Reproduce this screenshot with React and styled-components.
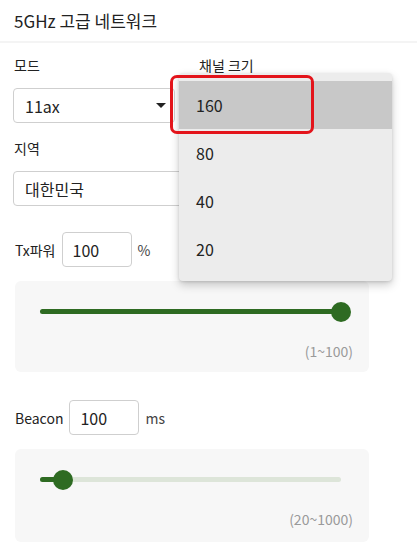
import React from 'react';
import styled, { createGlobalStyle } from 'styled-components';

const Global = createGlobalStyle`
	body {
		margin: 0;
		background: #fff;
		font-family: 'Noto Sans CJK KR', 'Noto Sans', sans-serif;
		color: #222;
	}
`;

const Pagina = styled.div`
	position: relative;
	width: 417px;
	height: 550px;
	overflow: hidden;
`;

const Encabezado = styled.div`
	height: 41px;
	padding: 0 14px;
	display: flex;
	align-items: center;
	font-size: 17px;
	border-bottom: 2px solid #f4f4f4;
	color: #222;
`;

const Formulario = styled.div`
	padding: 11px 13px 0 13px;
	display: flex;
	flex-direction: column;
`;

const Fila = styled.div`
	display: flex;
	gap: 23px;
`;

const Campo = styled.div`
	display: flex;
	flex-direction: column;
	width: ${(props) => props.ancho || '162px'};
`;

const Etiqueta = styled.div`
	font-size: 14px;
	height: 22px;
	line-height: 22px;
	padding-left: 1px;
	margin-bottom: 12px;
`;

const Selector = styled.div`
	height: 33px;
	border: 1px solid #cfcfcf;
	border-radius: 4px;
	display: flex;
	align-items: center;
	justify-content: space-between;
	padding: 0 8px 0 11px;
	font-size: 16px;
	margin-bottom: ${(props) => props.abajo || '14px'};
`;

const Flecha = styled.span`
	width: 0;
	height: 0;
	border-left: 5px solid transparent;
	border-right: 5px solid transparent;
	border-top: 5px solid #222;
`;

const FilaValor = styled.div`
	display: flex;
	align-items: center;
	gap: 6px;
	padding-left: 2px;
	font-size: 14px;
	margin-bottom: 14px;
`;

const Entrada = styled.div`
	width: 58px;
	height: 33px;
	border: 1px solid #cfcfcf;
	border-radius: 4px;
	display: flex;
	align-items: center;
	padding-left: 10px;
	font-size: 16px;
`;

const Unidad = styled.span`
	font-size: 14px;
	color: #444;
`;

const Panel = styled.div`
	margin-left: 2px;
	width: 354px;
	height: ${(props) => props.alto || '91px'};
	background: #f7f7f7;
	border-radius: 6px;
	box-sizing: border-box;
	padding: 22px 16px 0 25px;
	display: flex;
	flex-direction: column;
	margin-bottom: ${(props) => props.abajo || '0'};
`;

const Pista = styled.div`
	position: relative;
	width: 301px;
	height: 5px;
	border-radius: 3px;
	background: #dde5d9;
	margin-top: 6px;
`;

const Relleno = styled.div`
	height: 100%;
	border-radius: 3px;
	background: #2e6b22;
`;

const Pulgar = styled.div`
	position: absolute;
	top: 50%;
	width: 20px;
	height: 20px;
	margin: -10px 0 0 -10px;
	border-radius: 50%;
	background: #2e6b22;
`;

const Rango = styled.div`
	margin-top: 27px;
	align-self: flex-end;
	font-size: 14px;
	color: #9a9a9a;
`;

const Menu = styled.div`
	position: absolute;
	left: 179px;
	top: 73px;
	width: 213px;
	padding: 8px 0;
	background: #ececec;
	border-radius: 4px;
	box-shadow: 0 4px 10px rgba(0, 0, 0, 0.2), 0 1px 3px rgba(0, 0, 0, 0.12);
`;

const Opcion = styled.div`
	height: 48px;
	display: flex;
	align-items: center;
	padding-left: 17px;
	font-size: 16px;
	background: ${(props) => (props.activo ? '#c8c8c8' : 'transparent')};
`;

const Marco = styled.div`
	position: absolute;
	left: 170px;
	top: 75px;
	width: 138px;
	height: 53px;
	border: 3px solid #e3141b;
	border-radius: 7px;
`;

const Deslizador = ({ valor, min, max }) => {
	const pct = ((valor - min) / (max - min)) * 100;
	return (
		<Pista>
			<Relleno style={{ width: `${pct}%` }} />
			<Pulgar style={{ left: `${pct}%` }} />
		</Pista>
	);
};

const App = () => {
	return (
		<Pagina>
			<Global />
			<Encabezado>5GHz 고급 네트워크</Encabezado>
			<Formulario>
				<Fila>
					<Campo>
						<Etiqueta>모드</Etiqueta>
						<Selector>
							11ax
							<Flecha />
						</Selector>
					</Campo>
					<Campo>
						<Etiqueta>채널 크기</Etiqueta>
					</Campo>
				</Fila>
				<Campo ancho="354px">
					<Etiqueta>지역</Etiqueta>
					<Selector abajo="26px">
						대한민국
						<Flecha />
					</Selector>
				</Campo>
				<FilaValor>
					Tx파워
					<Entrada>100</Entrada>
					<Unidad>%</Unidad>
				</FilaValor>
				<Panel abajo="28px">
					<Deslizador valor={100} min={1} max={100} />
					<Rango>(1~100)</Rango>
				</Panel>
				<FilaValor>
					Beacon
					<Entrada>100</Entrada>
					<Unidad>ms</Unidad>
				</FilaValor>
				<Panel alto="93px">
					<Deslizador valor={95} min={20} max={1000} />
					<Rango>(20~1000)</Rango>
				</Panel>
			</Formulario>
			<Menu>
				<Opcion activo>160</Opcion>
				<Opcion>80</Opcion>
				<Opcion>40</Opcion>
				<Opcion>20</Opcion>
			</Menu>
			<Marco />
		</Pagina>
	);
};

export default App;
